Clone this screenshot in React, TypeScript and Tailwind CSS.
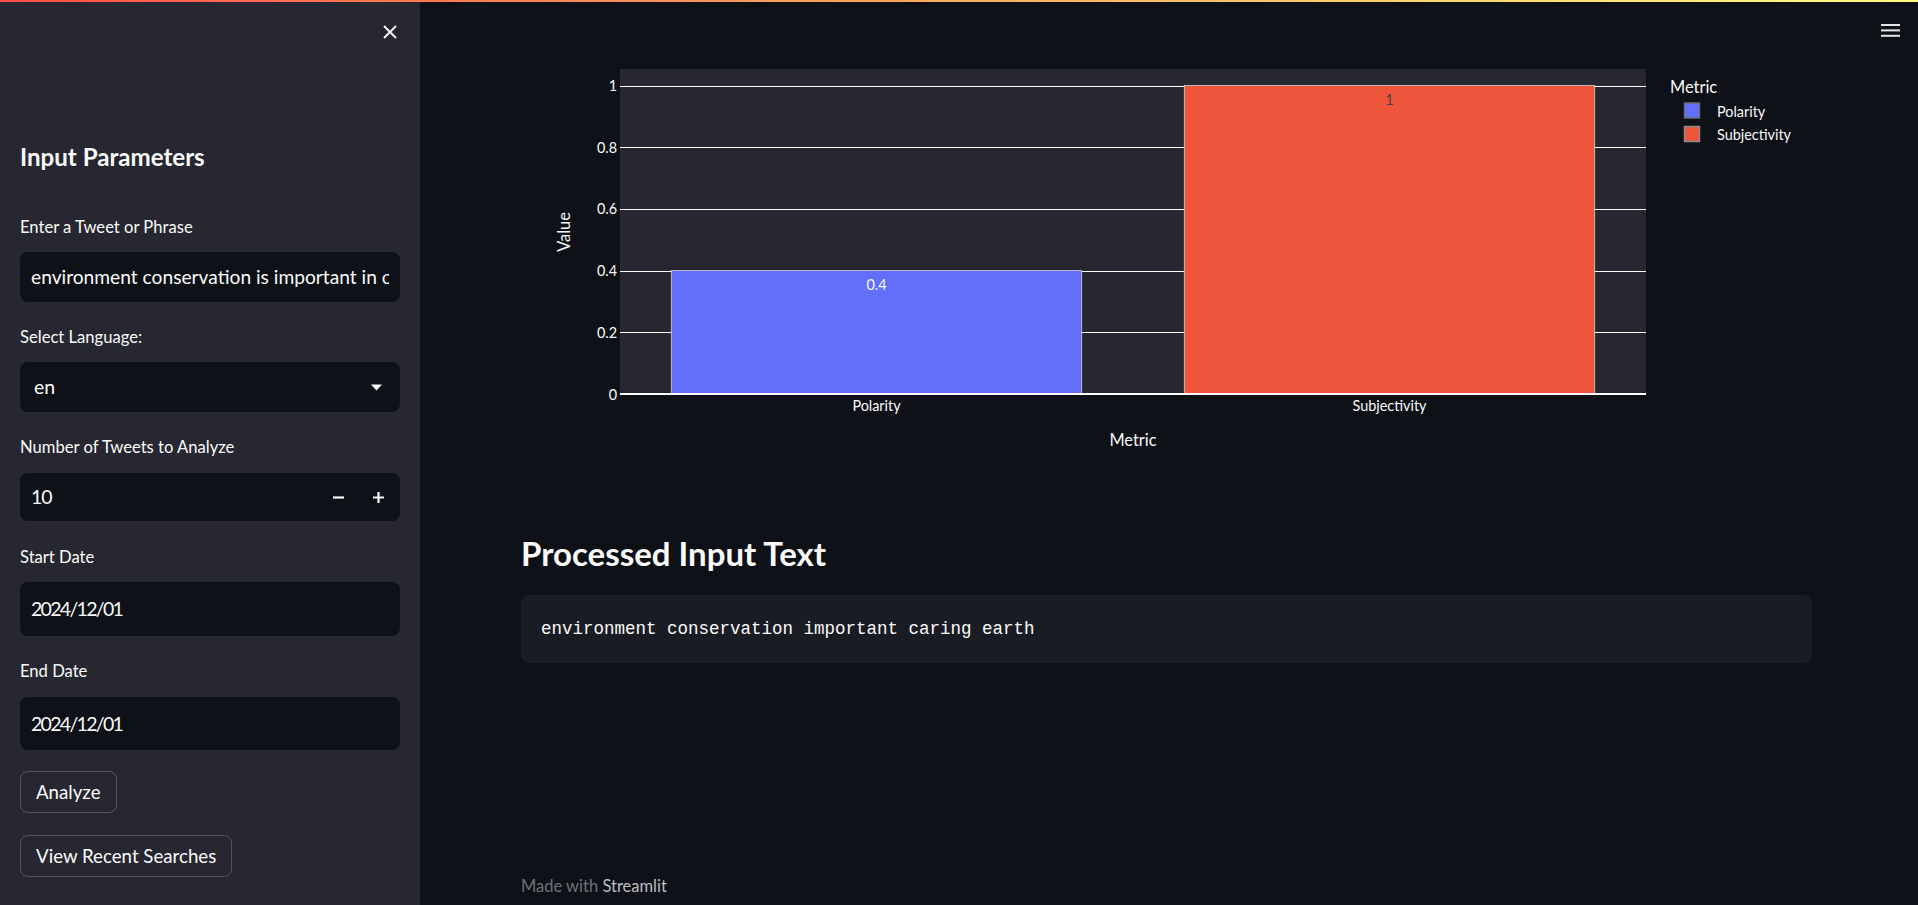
import React from "react";

function Label({ children, mt }: { children: React.ReactNode; mt: string }) {
  return (
    <div className={`${mt} h-[20px] whitespace-nowrap text-[16.6px] leading-[20px] text-[#fafafa]`}>
      {children}
    </div>
  );
}

function Sidebar() {
  return (
    <div className="flex h-full w-[420px] shrink-0 flex-col bg-[#262730] px-[20px]">
      <div className="flex h-[64px] items-center justify-end pr-[3px]">
        <svg width="14" height="14" viewBox="0 0 14 14">
          <path d="M1 1L13 13M13 1L1 13" stroke="#fafafa" strokeWidth="1.8" />
        </svg>
      </div>
      <div className="mt-[79px] h-[28px] whitespace-nowrap text-[24.1px] font-bold leading-[28px] text-[#fafafa]">
        Input Parameters
      </div>

      <Label mt="mt-[46px]">Enter a Tweet or Phrase</Label>
      <div className="mt-[15px] flex h-[50px] items-center rounded-[8px] bg-[#0e1117] px-[11px]">
        <div className="overflow-hidden whitespace-nowrap text-[19.2px] text-[#fafafa]">
          environment conservation is important in c
        </div>
      </div>

      <Label mt="mt-[25px]">Select Language:</Label>
      <div className="mt-[15px] flex h-[50px] items-center justify-between rounded-[8px] bg-[#0e1117] pl-[14px] pr-[18px]">
        <span className="text-[19.5px] text-[#fafafa]">en</span>
        <svg width="11" height="7" viewBox="0 0 11 7">
          <path d="M0 0.5H11L5.5 6.5Z" fill="#fafafa" />
        </svg>
      </div>

      <Label mt="mt-[25px]">Number of Tweets to Analyze</Label>
      <div className="mt-[16px] flex h-[48px] items-center rounded-[8px] bg-[#0e1117] pl-[11px] pr-[16px]">
        <span className="flex-1 text-[19.5px] tracking-[-1px] text-[#fafafa]">10</span>
        <svg width="11" height="11" viewBox="0 0 11 11" className="mr-[29px]">
          <path d="M0 5.5H11" stroke="#fafafa" strokeWidth="2.2" />
        </svg>
        <svg width="11" height="11" viewBox="0 0 11 11">
          <path d="M0 5.5H11M5.5 0V11" stroke="#fafafa" strokeWidth="2.2" />
        </svg>
      </div>

      <Label mt="mt-[26px]">Start Date</Label>
      <div className="mt-[15px] flex h-[54px] items-center rounded-[8px] bg-[#0e1117] pl-[11px]">
        <span className="text-[19.5px] tracking-[-1.7px] text-[#fafafa]">2024/12/01</span>
      </div>

      <Label mt="mt-[25px]">End Date</Label>
      <div className="mt-[16px] flex h-[53px] items-center rounded-[8px] bg-[#0e1117] pl-[11px]">
        <span className="text-[19.5px] tracking-[-1.7px] text-[#fafafa]">2024/12/01</span>
      </div>

      <button className="mt-[21px] flex h-[42px] items-center self-start rounded-[8px] border border-[#53545c] bg-[#262730] px-[15px] text-[18.7px] text-[#fafafa]">
        Analyze
      </button>
      <button className="mt-[22px] flex h-[42px] items-center self-start rounded-[8px] border border-[#53545c] bg-[#262730] px-[15px] text-[18.7px] text-[#fafafa]">
        View Recent Searches
      </button>
    </div>
  );
}

function Chart() {
  const y = (v: number) => 344 - v * 308.5;
  const grid = [0.2, 0.4, 0.6, 0.8, 1];
  const ticks = [
    { v: 0, t: "0" },
    { v: 0.2, t: "0.2" },
    { v: 0.4, t: "0.4" },
    { v: 0.6, t: "0.6" },
    { v: 0.8, t: "0.8" },
    { v: 1, t: "1" },
  ];
  return (
    <svg width="1291" height="440" viewBox="4 0 1291 440" className="block">
      <rect x="103" y="19" width="1026" height="325" fill="#262730" />
      {grid.map((g) => (
        <line key={g} x1="103" x2="1129" y1={Math.round(y(g)) + 0.5} y2={Math.round(y(g)) + 0.5} stroke="#ffffff" strokeWidth="1" />
      ))}
      <rect x="154.3" y={y(0.4)} width="410.4" height={0.4 * 308.5} fill="#636efa" stroke="#cfd0d6" strokeWidth="0.8" />
      <rect x="667.3" y={y(1)} width="410.4" height={308.5} fill="#ef553b" stroke="#cfd0d6" strokeWidth="0.8" />
      <line x1="103" x2="1129" y1="344" y2="344" stroke="#ffffff" strokeWidth="2" />
      {ticks.map((t) => (
        <text key={t.t} x="100" y={y(t.v)} textAnchor="end" dominantBaseline="central" fontSize="14.4" fill="#fafafa">
          {t.t}
        </text>
      ))}
      <text x="359.5" y="355" textAnchor="middle" dominantBaseline="central" fontSize="14.4" fill="#fafafa">Polarity</text>
      <text x="872.5" y="355" textAnchor="middle" dominantBaseline="central" fontSize="14.4" fill="#fafafa">Subjectivity</text>
      <text x="359.5" y="234" textAnchor="middle" dominantBaseline="central" fontSize="14.4" fill="#fafafa">0.4</text>
      <text x="872.5" y="49" textAnchor="middle" dominantBaseline="central" fontSize="14.4" fill="#444444">1</text>
      <text x="616" y="389" textAnchor="middle" dominantBaseline="central" fontSize="16.4" fill="#fafafa">Metric</text>
      <text x="46" y="182" textAnchor="middle" dominantBaseline="central" fontSize="16.4" fill="#fafafa" transform="rotate(-90 46 182)">Value</text>
      <text x="1153" y="36" dominantBaseline="central" fontSize="16.4" fill="#fafafa">Metric</text>
      <rect x="1167.5" y="53" width="15" height="15" fill="#636efa" stroke="#6b6c74" strokeWidth="1.5" />
      <rect x="1167.5" y="76.5" width="15" height="15" fill="#ef553b" stroke="#8a8a90" strokeWidth="1.5" />
      <text x="1200" y="61" dominantBaseline="central" fontSize="14.4" fill="#fafafa">Polarity</text>
      <text x="1200" y="84" dominantBaseline="central" fontSize="14.4" fill="#fafafa">Subjectivity</text>
    </svg>
  );
}

function Main() {
  return (
    <div className="flex min-w-0 flex-1 flex-col">
      <div className="flex h-[50px] justify-end pr-[18px] pt-[24px]">
        <svg width="19" height="13" viewBox="0 0 19 13">
          <rect x="0" y="0" width="19" height="2" fill="#e6e6e6" />
          <rect x="0" y="5.4" width="19" height="2" fill="#e6e6e6" />
          <rect x="0" y="10.8" width="19" height="2" fill="#e6e6e6" />
        </svg>
      </div>
      <div className="ml-[101px] flex w-[1291px] flex-col">
        <Chart />
        <h2 className="mt-[43px] h-[40px] whitespace-nowrap text-[33px] font-bold leading-[40px] text-[#fafafa]">
          Processed Input Text
        </h2>
        <div className="mt-[22px] flex h-[68px] items-center rounded-[8px] bg-[#1a1c24] pl-[20px] font-['Liberation_Mono',monospace] text-[17.5px] text-[#fafafa]">
          environment conservation important caring earth
        </div>
        <div className="mt-[211px] h-[24px] whitespace-nowrap text-[16.5px] leading-[24px] text-[#6f7177]">
          Made with <span className="text-[#bdbec2]">Streamlit</span>
        </div>
      </div>
    </div>
  );
}

export default function App() {
  return (
    <div className="relative flex h-[905px] w-[1918px] overflow-hidden bg-[#0e1117] font-['Lato',sans-serif] text-[#fafafa]">
      <div className="absolute left-0 right-0 top-0 z-10 h-[2px] bg-linear-to-r from-[#ff4b4b] to-[#fffd80]" />
      <Sidebar />
      <Main />
    </div>
  );
}
